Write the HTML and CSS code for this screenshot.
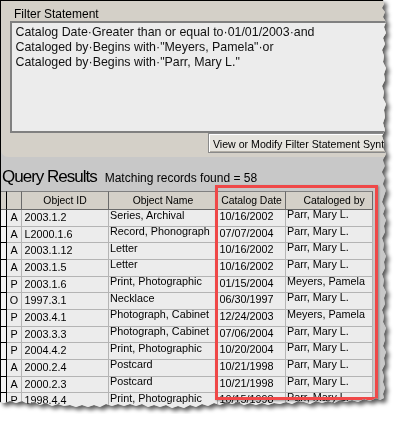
FILE: index.html
```html
<!DOCTYPE html>
<html lang="en">
<head>
    <meta charset="UTF-8">
    <meta name="viewport" content="width=device-width, initial-scale=1.0">
    <title>Query Results</title>
    <link rel="stylesheet" href="styles.css">
</head>
<body>
    <div class="shot">
        <div class="frame">
            <div class="filter-panel">
                <div class="filter-label">Filter Statement</div>
                <div class="filter-box">
                    <div>Catalog Date·Greater than or equal to·01/01/2003·and</div>
                    <div>Cataloged by·Begins with·"Meyers, Pamela"·or</div>
                    <div>Cataloged by·Begins with·"Parr, Mary L."</div>
                </div>
                <div class="modify-btn">View or Modify Filter Statement Syntax</div>
            </div>

            <div class="results">
                <div class="results-title">
                    <span class="title">Query Results</span>
                    <span class="count">Matching records found = 58</span>
                </div>

                <div class="grid">
                    <div class="row head">
                        <div class="cell sel"></div>
                        <div class="cell"></div>
                        <div class="cell">Object ID</div>
                        <div class="cell">Object Name</div>
                        <div class="cell">Catalog Date</div>
                        <div class="cell by">Cataloged by</div>
                        <div class="cell fill"></div>
                    </div>
                    <div class="row">
                        <div class="cell sel"></div><div class="cell type">A</div><div class="cell id">2003.1.2</div><div class="cell name">Series, Archival</div><div class="cell date">10/16/2002</div><div class="cell by">Parr, Mary L.</div><div class="cell fill"></div>
                    </div>
                    <div class="row">
                        <div class="cell sel"></div><div class="cell type">A</div><div class="cell id">L2000.1.6</div><div class="cell name">Record, Phonograph</div><div class="cell date">07/07/2004</div><div class="cell by">Parr, Mary L.</div><div class="cell fill"></div>
                    </div>
                    <div class="row">
                        <div class="cell sel"></div><div class="cell type">A</div><div class="cell id">2003.1.12</div><div class="cell name">Letter</div><div class="cell date">10/16/2002</div><div class="cell by">Parr, Mary L.</div><div class="cell fill"></div>
                    </div>
                    <div class="row">
                        <div class="cell sel"></div><div class="cell type">A</div><div class="cell id">2003.1.5</div><div class="cell name">Letter</div><div class="cell date">10/16/2002</div><div class="cell by">Parr, Mary L.</div><div class="cell fill"></div>
                    </div>
                    <div class="row">
                        <div class="cell sel"></div><div class="cell type">P</div><div class="cell id">2003.1.6</div><div class="cell name">Print, Photographic</div><div class="cell date">01/15/2004</div><div class="cell by">Meyers, Pamela</div><div class="cell fill"></div>
                    </div>
                    <div class="row">
                        <div class="cell sel"></div><div class="cell type">O</div><div class="cell id">1997.3.1</div><div class="cell name">Necklace</div><div class="cell date">06/30/1997</div><div class="cell by">Parr, Mary L.</div><div class="cell fill"></div>
                    </div>
                    <div class="row">
                        <div class="cell sel"></div><div class="cell type">P</div><div class="cell id">2003.4.1</div><div class="cell name">Photograph, Cabinet</div><div class="cell date">12/24/2003</div><div class="cell by">Meyers, Pamela</div><div class="cell fill"></div>
                    </div>
                    <div class="row">
                        <div class="cell sel"></div><div class="cell type">P</div><div class="cell id">2003.3.3</div><div class="cell name">Photograph, Cabinet</div><div class="cell date">07/06/2004</div><div class="cell by">Parr, Mary L.</div><div class="cell fill"></div>
                    </div>
                    <div class="row">
                        <div class="cell sel"></div><div class="cell type">P</div><div class="cell id">2004.4.2</div><div class="cell name">Print, Photographic</div><div class="cell date">10/20/2004</div><div class="cell by">Parr, Mary L.</div><div class="cell fill"></div>
                    </div>
                    <div class="row">
                        <div class="cell sel"></div><div class="cell type">A</div><div class="cell id">2000.2.4</div><div class="cell name">Postcard</div><div class="cell date">10/21/1998</div><div class="cell by">Parr, Mary L.</div><div class="cell fill"></div>
                    </div>
                    <div class="row">
                        <div class="cell sel"></div><div class="cell type">A</div><div class="cell id">2000.2.3</div><div class="cell name">Postcard</div><div class="cell date">10/21/1998</div><div class="cell by">Parr, Mary L.</div><div class="cell fill"></div>
                    </div>
                    <div class="row">
                        <div class="cell sel"></div><div class="cell type">P</div><div class="cell id">1998.4.4</div><div class="cell name">Print, Photographic</div><div class="cell date">10/15/1998</div><div class="cell by">Parr, Mary L.</div><div class="cell fill"></div>
                    </div>
                </div>
            </div>

            <!-- red callout round the two date/user columns -->
            <div class="highlight"></div>
        </div>
    </div>
</body>
</html>
```

FILE: styles.css
```css
* {
    box-sizing: border-box;
    margin: 0;
    padding: 0;
}

body {
    background: #fff;
    font-family: "Liberation Sans", Arial, sans-serif;
    color: #000;
}

/* torn-paper screenshot */
.shot {
    width: 392px;
    height: 414px;
    filter: drop-shadow(3px 3px 2px rgba(0,0,0,0.65));
}

.frame {
    position: relative;
    width: 392px;
    height: 414px;
    overflow: hidden;
    background: #c8c8c8;
    border-top: 1px solid #000;
    border-left: 1px solid #000;
    clip-path: polygon(
        0 0, 383px 0, 384px 4px, 382px 8px, 385px 12px, 383px 17px, 386px 22px, 384px 27px,
        386px 33px, 383px 38px, 385px 44px, 382px 50px, 384px 56px, 383px 62px, 386px 68px,
        384px 74px, 385px 80px, 382px 86px, 384px 92px, 383px 98px, 386px 104px, 384px 110px,
        385px 117px, 383px 123px, 385px 130px, 382px 136px, 384px 142px, 383px 148px,
        386px 154px, 383px 160px, 385px 166px, 382px 172px, 385px 178px, 383px 184px,
        386px 190px, 384px 196px, 382px 202px, 385px 208px, 383px 214px, 386px 220px,
        384px 226px, 385px 232px, 382px 238px, 384px 244px, 383px 250px, 386px 256px,
        384px 262px, 385px 268px, 382px 274px, 384px 280px, 383px 286px, 386px 292px,
        384px 298px, 385px 304px, 382px 310px, 384px 316px, 383px 322px, 386px 328px,
        384px 334px, 385px 340px, 383px 346px, 386px 352px, 384px 358px, 385px 364px,
        382px 370px, 384px 376px, 383px 382px, 385px 388px, 383px 394px, 384px 398px,
        380px 400px, 376px 398px, 370px 401px, 364px 399px, 358px 402px, 352px 400px,
        346px 402px, 340px 400px, 334px 403px, 328px 401px, 322px 403px, 316px 401px,
        310px 404px, 304px 402px, 298px 401px, 292px 404px, 286px 402px, 280px 404px,
        274px 403px, 268px 405px, 262px 403px, 256px 405px, 250px 403px, 244px 405px,
        238px 402px, 232px 404px, 226px 402px, 220px 405px, 214px 403px, 208px 406px,
        202px 404px, 196px 407px, 190px 405px, 184px 408px, 178px 406px, 172px 408px,
        166px 405px, 160px 407px, 154px 405px, 148px 407px, 142px 404px, 136px 406px,
        130px 404px, 124px 406px, 118px 404px, 112px 406px, 106px 404px, 100px 407px,
        94px 405px, 88px 407px, 82px 405px, 76px 407px, 70px 405px, 64px 406px,
        58px 404px, 52px 406px, 46px 403px, 40px 405px, 34px 402px, 28px 404px,
        22px 401px, 16px 403px, 10px 401px, 4px 403px, 0 402px
    );
}

/* filter statement panel */
.filter-panel {
    background: #d4d0c8;
    padding: 5.5px 0 4px 9px;
    border-bottom-left-radius: 7px;
}

.filter-label {
    font-size: 12px;
    line-height: 14px;
    padding-left: 4px;
}

.filter-box {
    width: 420px;
    height: 112px;
    padding: 2px 0 0 3.5px;
    background: #ececec;
    border: 2px solid #808080;
    font-size: 12.4px;
    line-height: 15px;
    color: #111;
}

.modify-btn {
    width: 230px;
    height: 20px;
    margin-left: 198px;
    padding: 2px 0 0 4px;
    background: #e6e4de;
    border: 1px solid #8a8a8a;
    box-shadow: inset 1px 1px 0 #fff, inset -1px -1px 0 #b0aca4;
    font-size: 10.6px;
    line-height: 16px;
    white-space: nowrap;
}

/* results */
.results-title {
    display: flex;
    align-items: baseline;
    padding: 10px 0 4px 1px;
    line-height: 20px;
}

.title {
    font-size: 17px;
    letter-spacing: -1px;
}

.count {
    margin-left: 8px;
    font-size: 12px;
    line-height: 14px;
}

.row {
    display: grid;
    grid-template-columns: 6px 15px 87px 109px 68px 87px 1fr;
    height: 16.67px;
    font-size: 10.8px;
    line-height: 9px;
}

.cell {
    background: #ececec;
    border-right: 1px solid #b4b4b4;
    border-bottom: 1px solid #b4b4b4;
    white-space: nowrap;
}

.cell.sel {
    background: #f4f4f4;
    border-right-color: #000;
    border-bottom-color: #000;
}

.cell.fill {
    background: #c8c8c8;
    border: none;
}

.type {
    text-align: center;
    padding-top: 3px;
}

.id {
    padding: 3px 0 0 2.5px;
}

.name {
    padding: 0.5px 0 0 1px;
}

.date {
    padding: 2px 0 0 1.5px;
}

.by {
    padding: 0 0 0 1px;
}

.row.head {
    height: 19.5px;
    font-size: 10.4px;
}

.row.head .cell {
    background: #d4d0c8;
    border-top: 1px solid #808080;
    border-right-color: #6a6a6a;
    border-bottom-color: #6a6a6a;
    padding: 4px 0 0;
    text-align: center;
}

.row.head .cell.sel {
    border-right-color: #000;
}

.row.head .cell.by {
    padding-left: 10px;
}

.row.head .cell.fill {
    background: #c8c8c8;
    border: none;
}

.highlight {
    position: absolute;
    left: 214px;
    top: 183.5px;
    width: 163px;
    height: 215px;
    border: 3px solid #ef4848;
    box-shadow: 1px 1px 2px rgba(0,0,0,0.35);
}
```
